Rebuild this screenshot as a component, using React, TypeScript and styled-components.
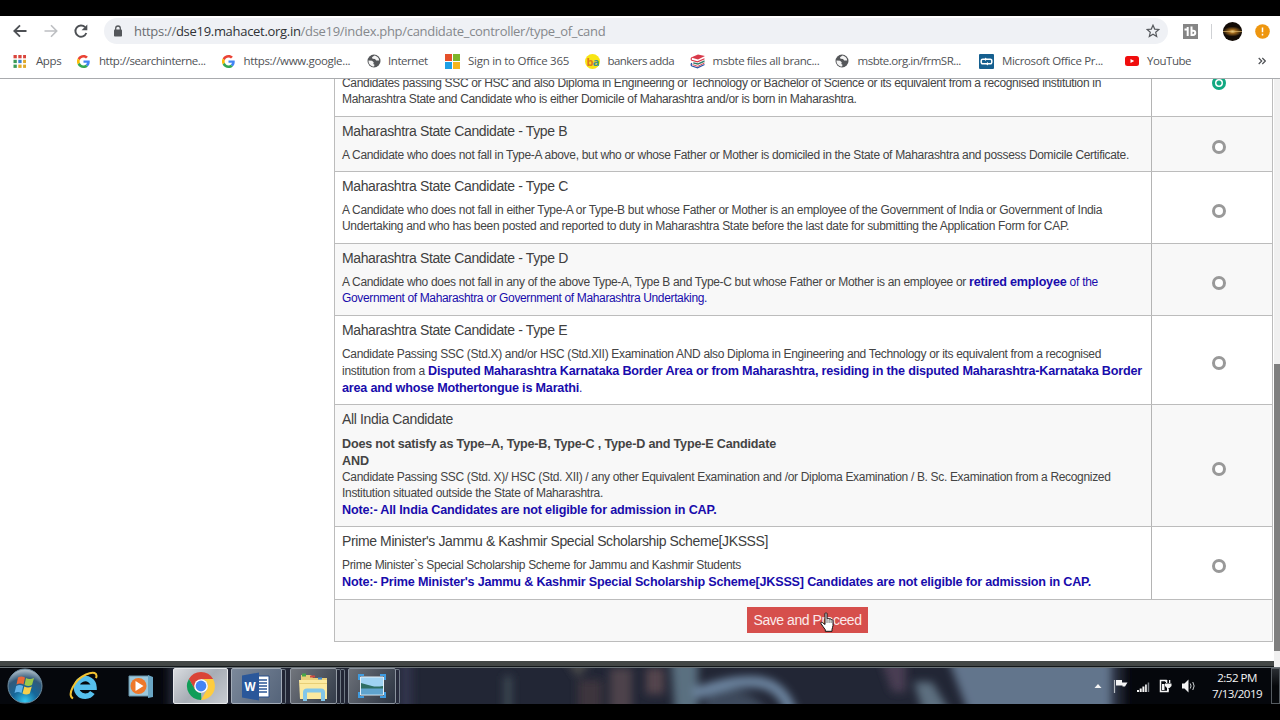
import { ReactNode } from "react";
import styled, { createGlobalStyle } from "styled-components";

const GlobalStyle = createGlobalStyle`
  * { box-sizing: border-box; }
  body { margin: 0; background: #000; overflow: hidden; }
`;

const Screen = styled.div`
  width: 1280px;
  height: 720px;
  padding: 16px 0;
  background: #000;
  display: flex;
  flex-direction: column;
  overflow: hidden;
`;

const UI_FONT = `"Open Sans", "Noto Sans", sans-serif`;
const PAGE_FONT = `"Liberation Sans", Arial, sans-serif`;

/* browser chrome */
const Toolbar = styled.div`
  height: 29px;
  flex: none;
  padding: 2px 9px 1px 12px;
  background: #fff;
  display: flex;
  align-items: center;
`;
const NavButton = styled.span<{ $gap: number }>`
  width: 16px;
  height: 16px;
  margin-right: ${(props) => props.$gap}px;
  display: flex;
`;
const Omnibox = styled.div`
  width: 1064px;
  height: 26px;
  padding: 0 8px 0 9px;
  border-radius: 13px;
  background: #eff1f5;
  display: flex;
  align-items: center;
`;
const Url = styled.span`
  margin-left: 11px;
  flex: 1;
  font: 13px/26px ${UI_FONT};
  letter-spacing: -0.3px;
  color: #85888c;
  white-space: pre;
`;
const Host = styled.span`
  color: #303236;
`;
const Scheme = styled.span`
  color: #6a6d71;
`;
const Extension = styled.span`
  margin-left: 15px;
  display: flex;
`;
const Divider = styled.span`
  width: 1px;
  height: 15px;
  margin: 0 11px 0 13px;
  background: #cfd1d4;
`;
const Alert = styled.span`
  width: 15px;
  height: 15px;
  margin-left: 13px;
  display: flex;
`;
const BookmarkBar = styled.div`
  height: 33px;
  flex: none;
  padding: 0 0 1px 13px;
  background: #fff;
  display: flex;
  align-items: center;
`;
const Bookmark = styled.div<{ $width: number }>`
  width: ${(props) => props.$width}px;
  height: 31px;
  flex: none;
  display: flex;
  align-items: center;
`;
const BookmarkLabel = styled.span<{ $gap: number; $track: number }>`
  height: 31px;
  margin-left: ${(props) => props.$gap}px;
  font: 11.5px/30px ${UI_FONT};
  letter-spacing: ${(props) => props.$track}px;
  color: #505256;
  white-space: pre;
`;

/* page */
const Page = styled.main`
  height: 583px;
  flex: none;
  border-top: 1px solid #a9abae;
  background: #fff;
  display: flex;
  overflow: hidden;
`;
const Sidebar = styled.div`
  width: 334px;
  flex: none;
`;
const Table = styled.div`
  width: 939px;
  flex: none;
  align-self: flex-start;
  border: solid #bcbcbc;
  border-width: 0 1px;
`;
const Row = styled.div<{ $height: number; $shaded?: boolean }>`
  height: ${(props) => props.$height}px;
  border-bottom: 1px solid #bcbcbc;
  background: ${(props) => (props.$shaded ? "#f8f8f8" : "#fff")};
  display: flex;
`;
const Description = styled.div<{ $cut?: boolean }>`
  width: 817px;
  flex: none;
  padding: ${(props) => (props.$cut ? "0" : "6px")} 0 0 7px;
  margin-top: ${(props) => (props.$cut ? "-4px" : "0")};
  border-right: 1px solid #b4b4b4;
`;
const Choice = styled.div<{ $cut?: boolean }>`
  flex: 1;
  padding: ${(props) => (props.$cut ? "0" : "6px")} 0 0 13px;
  margin-top: ${(props) => (props.$cut ? "-3px" : "0")};
  display: flex;
  align-items: ${(props) => (props.$cut ? "flex-start" : "center")};
  justify-content: center;
`;
const Heading = styled.h4<{ $track?: number }>`
  margin: 0 0 8px;
  font: 14px/16px ${PAGE_FONT};
  letter-spacing: ${(props) => props.$track ?? -0.376}px;
  color: #404040;
  white-space: pre;
`;
const Line = styled.div<{ $tall?: boolean }>`
  height: ${(props) => (props.$tall ? 17 : 16)}px;
  font: 12px/${(props) => (props.$tall ? 19 : 16)}px ${PAGE_FONT};
  color: #444;
  white-space: pre;
`;
const Run = styled.span<{ $bold?: boolean; $blue?: boolean; $track: number }>`
  font-size: ${(props) => (props.$bold ? "12.6px" : "inherit")};
  font-weight: ${(props) => (props.$bold ? 700 : 400)};
  color: ${(props) => (props.$blue ? "#180cac" : "inherit")};
  letter-spacing: ${(props) => props.$track}px;
`;
const Radio = styled.span<{ $checked?: boolean }>`
  width: 14px;
  height: 14px;
  border: 3px solid ${(props) => (props.$checked ? "#12a982" : "#999")};
  border-radius: 50%;
  background: ${(props) => (props.$checked ? "radial-gradient(#12a982 0 2px, #fff 3px)" : "#fff")};
`;
const Actions = styled.div`
  height: 42px;
  padding: 7px 0 0 412px;
  border-bottom: 1px solid #bcbcbc;
  background: #f8f8f8;
`;
const SaveButton = styled.button`
  position: relative;
  width: 121px;
  height: 26px;
  padding: 0;
  border: 0;
  background: #d64f4c;
  color: #fbeaea;
  font: 14px/26px ${PAGE_FONT};
  letter-spacing: -0.45px;
  display: block;
`;
const Pointer = styled.svg`
  position: absolute;
  left: 73px;
  top: 5px;
`;
const Scrollbar = styled.div`
  width: 6px;
  margin-left: 1px;
  padding-top: 285px;
  background: #f0f0f0;
`;
const Thumb = styled.div`
  height: 287px;
  background: #7f7f7f;
`;

/* taskbar */
const EdgeRow = styled.div`
  flex: none;
  padding-right: 6px;
  background: #f0f0f0;
`;
const PageEdge = styled.div`
  height: 6px;
  border-bottom: 1px solid #14181a;
  background: #434746;
`;
const Taskbar = styled.footer`
  position: relative;
  height: 37px;
  flex: none;
  border-top: 1px solid #6c7479;
  background: #05070c;
  display: flex;
  align-items: center;
`;
const Glass = styled.svg`
  position: absolute;
  left: 0;
  top: 0;
`;
const Launcher = styled.span<{ $left: number }>`
  position: relative;
  margin-left: ${(props) => props.$left}px;
  display: flex;
`;
const Task = styled.span<{ $left: number; $width: number; $bg: string; $edge: string }>`
  position: relative;
  width: ${(props) => props.$width}px;
  height: 36px;
  margin-left: ${(props) => props.$left}px;
  border: 1px solid ${(props) => props.$edge};
  border-radius: 2px;
  background: ${(props) => props.$bg};
  display: flex;
  align-items: center;
  justify-content: center;
`;
const Stack = styled.span`
  position: relative;
  width: 4px;
  height: 35px;
  border: solid #6f7984;
  border-width: 1px 1px 1px 0;
  border-radius: 0 2px 2px 0;
`;
const Tray = styled.div`
  position: relative;
  margin-left: auto;
  display: flex;
  align-items: center;
`;
const Clock = styled.div`
  width: 54px;
  color: #f4f4f4;
  text-align: center;
  font: 11.6px/16px ${UI_FONT};
  letter-spacing: -0.52px;
  white-space: pre;
`;
const ShowDesktop = styled.span`
  width: 9px;
  height: 36px;
  margin-left: 7px;
  border: 1px solid #555b60;
  background: linear-gradient(#2a2e33, #06080b 50%);
`;

const GoogleIcon = () => (
  <svg width="13" height="13" viewBox="0 0 48 48">
    <path fill="#ea4335" d="M24 9.500c3.500 0 6.700 1.200 9.200 3.600l6.900-6.900C35.900 2.400 30.500 0 24 0 14.600 0 6.500 5.400 2.600 13.200l8 6.200C12.400 13.700 17.700 9.500 24 9.500z" />
    <path fill="#4285f4" d="M47 24.500c0-1.600-.2-3.100-.4-4.500H24v9h12.900c-.6 3-2.200 5.500-4.800 7.200l7.700 6C44.400 38 47 32 47 24.500z" />
    <path fill="#fbbc05" d="M10.500 28.600a14.500 14.500 0 0 1 0-9.200l-8-6.200a24 24 0 0 0 0 21.600z" />
    <path fill="#34a853" d="M24 48c6.500 0 11.900-2.100 15.900-5.800l-7.700-6c-2.200 1.500-4.900 2.300-8.200 2.300-6.300 0-11.600-4.200-13.500-9.900l-8 6.200C6.500 42.600 14.600 48 24 48z" />
  </svg>
);
const GlobeIcon = () => (
  <svg width="14" height="14" viewBox="0 0 14 14">
    <circle cx="7" cy="7" r="6.500" fill="#55575a" />
    <path d="M7.500 1.500 5 3.200l.5 1.600 2.500.3 1.200 1.500h2.900C12.300 4 10 2 7.500 1.500zM1.500 6.500l3.500.2 1.700 1.600-.4 1.700 1.200.8-.4 1.700C4 12.600 1.300 10 1.500 6.500z" fill="#f3f3f3" />
  </svg>
);
const AppsIcon = () => (
  <svg width="13" height="13" viewBox="0 0 13 13">
    {["#d9453c", "#d9453c", "#d9453c", "#3b9b57", "#3b7fd0", "#e0a92a", "#3b9b57", "#e0a92a", "#e0a92a"].map((fill, i) => (
      <rect key={i} x={0.5 + (i % 3) * 4.8} y={Math.floor(i / 3) * 4.8} width="3.3" height="3.3" fill={fill} />
    ))}
  </svg>
);
const MicrosoftIcon = () => (
  <svg width="15" height="15" viewBox="0 0 15 15">
    <path fill="#e5502a" d="M0 0h7v7H0z" />
    <path fill="#7db52a" d="M8 0h7v7H8z" />
    <path fill="#1ea0e6" d="M0 8h7v7H0z" />
    <path fill="#f6b51e" d="M8 8h7v7H8z" />
  </svg>
);
const BankersIcon = () => (
  <svg width="15" height="15" viewBox="0 0 15 15">
    <circle cx="7.500" cy="7.500" r="7.500" fill="#f8e513" />
    <text x="1.500" y="11.500" fontFamily="Open Sans" fontWeight="700" fontSize="11" letterSpacing="-.8" fill="#df7a1c">b<tspan fill="#3c8f93">a</tspan></text>
  </svg>
);
const BooksIcon = () => (
  <svg width="16" height="15" viewBox="0 0 16 15">
    <path fill="#d8394a" d="M1 3.500 8 .5l7 1.500-7 3.500z" />
    <path fill="none" stroke="#d8394a" strokeWidth="1.100" d="M1.800 3.600q-1.300 1.500 0 2.700l5.700 1.500 7-3" />
    <path fill="#327b69" d="M3.500 8.200 8 9.300l6.500-3V8L8 10.800 3 9.600z" />
    <path fill="none" stroke="#2c54a5" strokeWidth="1.300" d="M1.800 9q-1.300 2 .2 3l5.500 1.800 7-3.300" />
    <path stroke="#d8394a" strokeWidth=".9" fill="none" d="m2.500 10.600 5.300 1.700L14.500 9" />
  </svg>
);
const LinkIcon = () => (
  <svg width="15" height="15" viewBox="0 0 15 15">
    <rect width="15" height="15" rx="1" fill="#155f8f" />
    <path fill="none" stroke="#fff" strokeWidth="1.500" d="M6.500 5.200H3.700a1.500 1.500 0 0 0-1.500 1.500v1.600a1.500 1.500 0 0 0 1.500 1.500h4.500M8.500 9.800h2.800a1.500 1.500 0 0 0 1.500-1.500V6.700a1.500 1.500 0 0 0-1.500-1.500H6.800" />
    <path fill="#fff" d="M6 3.500v3.400l2.200-1.700zM9 8.100v3.400L6.800 9.800z" />
  </svg>
);
const YouTubeIcon = () => (
  <svg width="14" height="10" viewBox="0 0 14 10">
    <rect width="14" height="10" rx="2.500" fill="#f00d0d" />
    <path fill="#fff" d="M5.500 2.900v4.200L9.200 5z" />
  </svg>
);

type BookmarkItem = { icon: ReactNode; label: string; width: number; gap: number; track: number };

const bookmarks: BookmarkItem[] = [
  { icon: <AppsIcon />, label: "Apps", width: 64, gap: 10, track: -0.4 },
  { icon: <GoogleIcon />, label: "http://searchinterne...", width: 145, gap: 9, track: -0.46 },
  { icon: <GoogleIcon />, label: "https://www.google...", width: 145, gap: 8.5, track: -0.33 },
  { icon: <GlobeIcon />, label: "Internet", width: 78, gap: 7, track: -0.44 },
  { icon: <MicrosoftIcon />, label: "Sign in to Office 365", width: 140, gap: 8, track: -0.27 },
  { icon: <BankersIcon />, label: "bankers adda", width: 105, gap: 7.5, track: -0.54 },
  { icon: <BooksIcon />, label: "msbte files all branc...", width: 145, gap: 6.5, track: -0.39 },
  { icon: <GlobeIcon />, label: "msbte.org.in/frmSR...", width: 144, gap: 8.5, track: -0.48 },
  { icon: <LinkIcon />, label: "Microsoft Office Pr...", width: 146, gap: 8, track: -0.36 },
  { icon: <YouTubeIcon />, label: "YouTube", width: 133, gap: 8, track: -0.46 },
];

type Piece = { text: string; track: number; bold?: boolean; blue?: boolean };
type Candidate = { title?: string; titleTrack?: number; height: number; lines: Piece[][] };

const candidates: Candidate[] = [
  {
    height: 38,
    lines: [
      [{ text: "Candidates passing SSC or HSC and also Diploma in Engineering or Technology or Bachelor of Science or its equivalent from a recognised institution in", track: -0.326 }],
      [{ text: "Maharashtra State and Candidate who is either Domicile of Maharashtra and/or is born in Maharashtra.", track: -0.331 }],
    ],
  },
  {
    title: "Maharashtra State Candidate - Type B",
    height: 55,
    lines: [
      [{ text: "A Candidate who does not fall in Type-A above, but who or whose Father or Mother is domiciled in the State of Maharashtra and possess Domicile Certificate.", track: -0.318 }],
    ],
  },
  {
    title: "Maharashtra State Candidate - Type C",
    height: 72,
    lines: [
      [{ text: "A Candidate who does not fall in either Type-A or Type-B but whose Father or Mother is an employee of the Government of India or Government of India", track: -0.315 }],
      [{ text: "Undertaking and who has been posted and reported to duty in Maharashtra State before the last date for submitting the Application Form for CAP.", track: -0.316 }],
    ],
  },
  {
    title: "Maharashtra State Candidate - Type D",
    height: 72,
    lines: [
      [
        { text: "A Candidate who does not fall in any of the above Type-A, Type B and Type-C but whose Father or Mother is an employee or ", track: -0.32 },
        { text: "retired employee", track: -0.206, bold: true, blue: true },
        { text: " of the", track: -0.266, blue: true },
      ],
      [{ text: "Government of Maharashtra or Government of Maharashtra Undertaking.", track: -0.356, blue: true }],
    ],
  },
  {
    title: "Maharashtra State Candidate - Type E",
    height: 89,
    lines: [
      [{ text: "Candidate Passing SSC (Std.X) and/or HSC (Std.XII) Examination AND also Diploma in Engineering and Technology or its equivalent from a recognised", track: -0.33 }],
      [
        { text: "institution from a ", track: -0.283 },
        { text: "Disputed Maharashtra Karnataka Border Area or from Maharashtra, residing in the disputed Maharashtra-Karnataka Border", track: -0.186, bold: true, blue: true },
      ],
      [
        { text: "area and whose Mothertongue is Marathi", track: -0.19, bold: true, blue: true },
        { text: ".", track: 0, blue: true },
      ],
    ],
  },
  {
    title: "All India Candidate",
    titleTrack: -0.344,
    height: 122,
    lines: [
      [{ text: "Does not satisfy as Type–A, Type-B, Type-C , Type-D and Type-E Candidate", track: -0.186, bold: true }],
      [{ text: "AND", track: -0.1, bold: true }],
      [{ text: "Candidate Passing SSC (Std. X)/ HSC (Std. XII) / any other Equivalent Examination and /or Diploma Examination / B. Sc. Examination from a Recognized", track: -0.328 }],
      [{ text: "Institution situated outside the State of Maharashtra.", track: -0.306 }],
      [{ text: "Note:- All India Candidates are not eligible for admission in CAP.", track: -0.157, bold: true, blue: true }],
    ],
  },
  {
    title: "Prime Minister's Jammu & Kashmir Special Scholarship Scheme[JKSSS]",
    titleTrack: -0.388,
    height: 73,
    lines: [
      [{ text: "Prime Minister`s Special Scholarship Scheme for Jammu and Kashmir Students", track: -0.34 }],
      [{ text: "Note:- Prime Minister's Jammu & Kashmir Special Scholarship Scheme[JKSSS] Candidates are not eligible for admission in CAP.", track: -0.186, bold: true, blue: true }],
    ],
  },
];

function TaskbarGlass() {
  return (
    <Glass width="1280" height="36" viewBox="0 0 1280 36">
      <defs>
        <filter id="soft" filterUnits="userSpaceOnUse" x="0" y="-40" width="1280" height="120">
          <feGaussianBlur stdDeviation="4.500" />
        </filter>
      </defs>
      <rect x="168" y="-20" width="957" height="80" fill="#222834" filter="url(#soft)" />
      <g filter="url(#soft)">
        <path fill="#33364e" d="M400-10h12v60h-12z" />
        <path fill="#3c4953" d="M504 8h8v50h-8z" />
        <path fill="#4a4a4a" d="M564-10h30l-16 20z" />
        <path fill="#3d343d" d="M578 12h24v40h-24z" />
        <path fill="#4d424c" d="M610 0h22v60h-22z" />
        <path fill="#54454d" d="M646 0h18v26h-18z" />
        <path fill="#5a6f80" d="M670-20h28v80h-22z" />
        <path fill="#3d4a5b" d="M706 26q44-16 72 30h-75z" />
        <path fill="none" stroke="#6e87a3" strokeWidth="11" d="M694 26q34-14 62-12 30 2 38 40" />
        <path fill="#483e52" d="M880-10h26v34h-14z" />
        <path fill="#5d7080" d="M914 14h18l24 40h-30z" />
        <path fill="#62748c" d="M944-20h168v80H974z" />
      </g>
    </Glass>
  );
}

function App() {
  return (
    <Screen>
      <GlobalStyle />
      <Toolbar>
        <NavButton $gap={15}>
          <svg width="16" height="16" viewBox="0 0 16 16" fill="none" stroke="#4d5054" strokeWidth="1.800">
            <path d="M14.500 8H2.500M8 2.300 2.300 8 8 13.700" />
          </svg>
        </NavButton>
        <NavButton $gap={14}>
          <svg width="16" height="16" viewBox="0 0 16 16" fill="none" stroke="#bdbfc2" strokeWidth="1.600">
            <path d="M1.500 8h12M8 2.300 13.700 8 8 13.700" />
          </svg>
        </NavButton>
        <NavButton $gap={15}>
          <svg width="16" height="16" viewBox="0 0 16 16">
            <path fill="none" stroke="#4d5054" strokeWidth="1.900" d="M13.300 10a5.600 5.600 0 1 1-1.200-5.800" />
            <path fill="#4d5054" d="M14.300 1.500v5.700H8.600z" />
          </svg>
        </NavButton>
        <Omnibox>
          <svg width="10" height="12" viewBox="0 0 10 12">
            <rect x="1" y="4.500" width="8" height="7" rx=".8" fill="#54575b" />
            <path fill="none" stroke="#54575b" strokeWidth="1.300" d="M2.700 5V3.300a2.300 2.300 0 0 1 4.600 0V5" />
          </svg>
          <Url>
            <Scheme>https://</Scheme>
            <Host>dse19.mahacet.org.in</Host>/dse19/index.php/candidate_controller/type_of_cand
          </Url>
          <svg width="14" height="14" viewBox="0 0 14 14">
            <path fill="none" stroke="#56595d" strokeWidth="1.200" d="m7 1.200 1.700 3.900 4.200.4-3.200 2.800 1 4.200L7 10.300l-3.700 2.200 1-4.200L1.100 5.500l4.200-.4z" />
          </svg>
        </Omnibox>
        <Extension>
          <svg width="15" height="15" viewBox="0 0 15 15">
            <rect width="15" height="15" fill="#858585" />
            <path fill="none" stroke="#fff" strokeWidth="2" d="M1.500 5.500h4M4.700 3v9M8.500 2.500v8.500h1.600a2 2 0 0 0 0-4.300H8.500" />
          </svg>
        </Extension>
        <Divider />
        <svg width="19" height="19" viewBox="0 0 19 19">
          <defs>
            <radialGradient id="flare">
              <stop offset="0" stopColor="#ffe7a0" />
              <stop offset=".35" stopColor="#a56c1e" />
              <stop offset="1" stopColor="#120b06" />
            </radialGradient>
          </defs>
          <circle cx="9.500" cy="9.500" r="9.500" fill="#120b06" />
          <ellipse cx="9.500" cy="9.500" rx="9.500" ry="5" fill="url(#flare)" />
          <path stroke="#d9b36a" strokeWidth=".7" d="M0 9.500h19" />
        </svg>
        <Alert>
          <svg width="15" height="15" viewBox="0 0 15 15">
            <circle cx="7.500" cy="7.500" r="7.300" fill="#ee960f" />
            <path stroke="#fff" strokeWidth="1.500" d="M7.500 3.500v4.700M7.500 9.800v1.600" />
          </svg>
        </Alert>
      </Toolbar>
      <BookmarkBar>
        {bookmarks.map((item) => (
          <Bookmark key={item.label} $width={item.width}>
            {item.icon}
            <BookmarkLabel $gap={item.gap} $track={item.track}>
              {item.label}
            </BookmarkLabel>
          </Bookmark>
        ))}
        <svg width="8" height="8" viewBox="0 0 8 8" fill="none" stroke="#505256" strokeWidth="1.200">
          <path d="m.7 1 3 3-3 3M4.300 1l3 3-3 3" />
        </svg>
      </BookmarkBar>
      <Page>
        <Sidebar />
        <Table>
          {candidates.map((candidate, i) => (
            <Row key={i} $height={candidate.height} $shaded={i % 2 === 1}>
              <Description $cut={!candidate.title}>
                {candidate.title && <Heading $track={candidate.titleTrack}>{candidate.title}</Heading>}
                {candidate.lines.map((line, n) => (
                  <Line key={n} $tall={line.some((piece) => piece.bold) && i > 3}>
                    {line.map((piece) => (
                      <Run key={piece.text} $bold={piece.bold} $blue={piece.blue} $track={piece.track}>
                        {piece.text}
                      </Run>
                    ))}
                  </Line>
                ))}
              </Description>
              <Choice $cut={!candidate.title}>
                <Radio $checked={i === 0} />
              </Choice>
            </Row>
          ))}
          <Actions>
            <SaveButton>
              Save and Proceed
              <Pointer width="15" height="21" viewBox="0 0 15 21">
                <path fill="#fff" stroke="#111" strokeWidth="1" d="M5 1.700c0-1.200 2-1.200 2 0v5.200c.3-.8 2-.7 2.100.3.500-.7 2-.5 2 .6.500-.6 1.900-.2 1.900.9v4.800c0 1.500-1 2.500-1 4v1.800H5.300v-1.500C4.300 16 2 13.500 1 11.700c-.7-1.300.8-2 1.700-1L5 12.500z" />
                <path stroke="#111" strokeWidth=".6" d="M7 7v4M9.100 7.500V11M11.100 8v3" />
              </Pointer>
            </SaveButton>
          </Actions>
        </Table>
        <Scrollbar>
          <Thumb />
        </Scrollbar>
      </Page>
      <EdgeRow>
        <PageEdge />
      </EdgeRow>
      <Taskbar>
        <TaskbarGlass />
        <Launcher $left={7}>
          <svg width="36" height="36" viewBox="0 0 36 36">
            <defs>
              <radialGradient id="orb" cx=".5" cy=".95" r=".9">
                <stop offset="0" stopColor="#35c9f2" />
                <stop offset=".4" stopColor="#15679a" />
                <stop offset=".75" stopColor="#31597a" />
                <stop offset="1" stopColor="#a3b4c0" />
              </radialGradient>
            </defs>
            <circle cx="18" cy="18" r="17" fill="url(#orb)" stroke="#6e8ca0" strokeWidth="1" />
            <path fill="#e9683a" d="M11 9.500c2.500-1.500 4.500-1.200 7 0l-1.500 7c-2.500-1.300-4.500-1.200-7 0z" />
            <path fill="#9bc94a" d="M19 10c2.500 1.300 5 1.300 8 0l-2 7c-2.500 1.300-4.500 1.300-7.500 0z" />
            <path fill="#63b3ea" d="M9.200 18c2.500-1.200 4.500-1.200 7 0l-1.700 7c-2.500-1.200-4.500-1.200-7 0z" />
            <path fill="#f8cf4c" d="M17.300 18.500c2.500 1.300 5 1.200 7.500 0l-2 7c-2.500 1.300-4.500 1.300-7.300 0z" />
          </svg>
        </Launcher>
        <Launcher $left={26}>
          <svg width="30" height="30" viewBox="0 0 30 30">
            <path fill="none" stroke="#56bfec" strokeWidth="5.500" d="M8 16.200h17a8.800 8.800 0 1 0-1.600 5.300" />
            <path fill="none" stroke="#f3c331" strokeWidth="2" d="M4 27.500C-2 24 5 9 17 3.500c7.500-3.500 12-1.800 10 3.700" />
          </svg>
        </Launcher>
        <Launcher $left={29}>
          <svg width="26" height="25" viewBox="0 0 26 25">
            <path fill="#9cc8dc" stroke="#6693a9" d="M1 2h20v20H1z" />
            <path fill="#6aa6c4" d="m20 1 5 2v20l-5 1z" />
            <circle cx="10.500" cy="12" r="8" fill="#ee782b" />
            <path fill="#fff" d="M7.500 7v10l8-5z" />
          </svg>
        </Launcher>
        <Task $left={19} $width={55} $bg="linear-gradient(135deg,#d9dce0,#a7adb5 50%,#c7cbd1)" $edge="#e7e9ec">
          <svg width="30" height="30" viewBox="0 0 30 30">
            <path fill="#da4437" d="M15 15V1a14 14 0 0 1 12.100 7H15zM15 15 8.900 18.500 2.900 8A14 14 0 0 1 15 1z" />
            <path fill="#109d58" d="M2.900 8 9 18.500a7 7 0 0 0 6 3.500l.5 7A14 14 0 0 1 2.900 8z" />
            <path fill="#fecc3f" d="M27.100 8A14 14 0 0 1 15 29l6-10.500A7 7 0 0 0 15 8z" />
            <circle cx="15" cy="15" r="6.800" fill="#fff" />
            <circle cx="15" cy="15" r="5.400" fill="#4484f4" />
          </svg>
        </Task>
        <Task $left={3} $width={51} $bg="linear-gradient(120deg,#7b889a,#55647a)" $edge="#a3acb8">
          <svg width="29" height="29" viewBox="0 0 29 29">
            <path fill="#fff" stroke="#274f8c" d="M14 4h13v21H14z" />
            <path stroke="#2b5797" strokeWidth="1.300" d="M17 8h8M17 11h8M17 14h8M17 17h8M17 20h8" />
            <path fill="#2a579a" d="m0 3.500 17-3v28l-17-3z" />
            <text x="2.500" y="18.500" fontFamily="Open Sans" fontWeight="700" fontSize="11.500" fill="#fff">W</text>
          </svg>
        </Task>
        <Stack />
        <Task $left={4} $width={47} $bg="linear-gradient(120deg,#71757c,#343c4a)" $edge="#939aa3">
          <svg width="32" height="29" viewBox="0 0 32 29">
            <path fill="#e8ce79" d="M3 3h10l2 3h14v20H3z" />
            <path fill="#fbe9a0" d="M1 8h28v19H2z" />
            <path fill="#e3c76c" d="M1 11h28v.8H1z" />
            <path fill="#47a648" d="M4 1.500h4v3H4z" />
            <path fill="#d24a3f" d="M12 3.500h5v2h-5z" />
            <path fill="#3d8bd1" d="M20 5.500h4v2h-4z" />
            <path fill="none" stroke="#82c6ea" strokeWidth="4" d="M7 29v-8.500c0-1 .7-2 2-2h14c1.300 0 2 1 2 2V29" />
          </svg>
        </Task>
        <Stack />
        <Stack />
        <Task $left={3} $width={48} $bg="linear-gradient(120deg,#6b7078,#2c3442)" $edge="#8b939e">
          <svg width="28" height="24" viewBox="0 0 28 24">
            <path fill="none" stroke="#3f9ce0" strokeWidth="2" d="M1 6V1h5M22 1h5v5M27 18v5h-5M6 23H1v-5" />
            <path fill="#9fd2f2" stroke="#e4f0f7" d="M2.500 3h23v18h-23z" />
            <path fill="#2e6e63" d="M3 9q7 2 11 3t11 0v3H3z" />
            <path fill="#5fa3cd" d="M3 14.500h22v6H3z" />
          </svg>
        </Task>
        <Stack />
        <Tray>
          <svg width="120" height="20" viewBox="0 0 120 20">
            <path fill="#f4f4f4" d="M4.500 12 8 8l3.500 4z" />
            <path stroke="#b9bdc2" strokeWidth="1.200" d="M24.500 4v13" />
            <path fill="#f4f4f4" d="M26 4h6v2.500h5.500L35 10.500h-2.500V9.500H26z" />
            <path fill="#f4f4f4" d="M47 14h2v2h-2zM49.700 12.500h2V16h-2zM52.400 10.500h2V16h-2zM55.100 8.500h1.700V16h-1.700z" />
            <path fill="#7d8288" d="M57.700 6.500h1.500V16h-1.500z" />
            <path fill="none" stroke="#f4f4f4" strokeWidth="1.500" d="M76 6V4.500h-5.500V15.500H78V13" />
            <path fill="#f4f4f4" d="M72 8h2.500v6H72zM75 7.500h6.500V10l-2 2h-1v3H77v-3l-2-2zM76 4h1.300v3H76zM79 4h1.300v3H79z" />
            <path fill="#f4f4f4" d="M92 7.500h2.500l4-4v13l-4-4H92z" />
            <path fill="none" stroke="#cfd3d6" d="M100.300 7.500q1.500 2.500 0 5M102.800 6q2.700 4 0 8" />
          </svg>
          <Clock>{"2:52 PM\n7/13/2019"}</Clock>
          <ShowDesktop />
        </Tray>
      </Taskbar>
    </Screen>
  );
}
export default App;
